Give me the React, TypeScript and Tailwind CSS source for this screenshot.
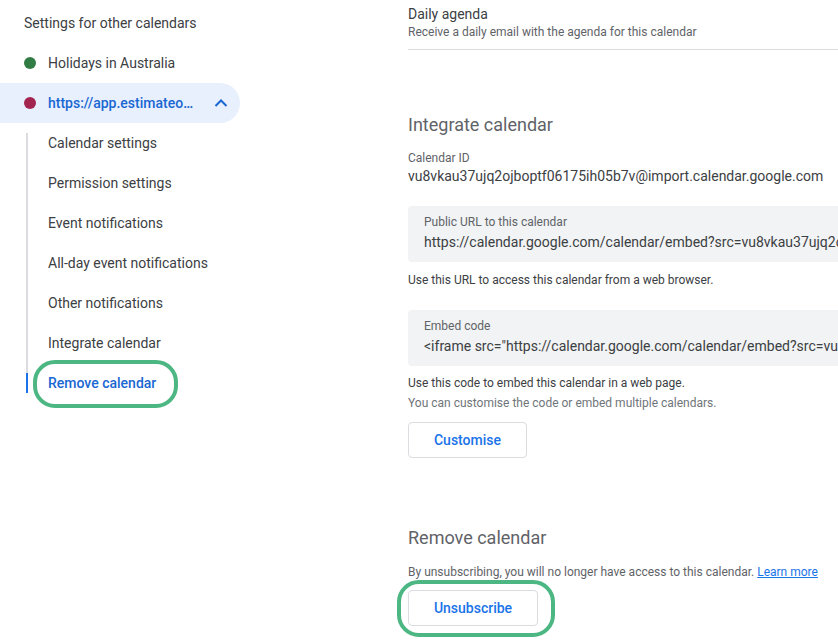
import React from "react";

const subItems = [
  "Calendar settings",
  "Permission settings",
  "Event notifications",
  "All-day event notifications",
  "Other notifications",
  "Integrate calendar",
];

export default function App() {
  return (
    <div
      className="flex w-[838px] h-[642px] overflow-hidden bg-white text-[#3c4043]"
      style={{ fontFamily: "Roboto, 'Liberation Sans', Arial, sans-serif" }}
    >
      {/* Sidebar */}
      <div className="w-[408px] shrink-0 pt-[3px]">
        <div className="h-[40px] flex items-center pl-[24px] text-[14px] leading-[20px] text-[#3c4043]">
          Settings for other calendars
        </div>
        <div className="h-[40px] flex items-center pl-[24px] text-[14px] leading-[20px]">
          <span className="w-[12px] h-[12px] rounded-full bg-[#317c45] shrink-0" />
          <span className="ml-[12px]">Holidays in Australia</span>
        </div>
        <div className="w-[240px] h-[40px] flex items-center pl-[24px] pr-[12px] bg-[#e8f0fe] rounded-r-full">
          <span className="w-[12px] h-[12px] rounded-full bg-[#a2244f] shrink-0" />
          <span className="ml-[12px] flex-1 text-[14px] leading-[20px] font-medium text-[#1967d2] whitespace-nowrap">
            https://app.estimateo…
          </span>
          <svg width="14" height="10" viewBox="0 0 14 10">
            <polyline
              points="1.5,8 7,2.5 12.5,8"
              fill="none"
              stroke="#1967d2"
              strokeWidth="2"
            />
          </svg>
        </div>
        <div className="ml-[26px] mt-[10px] border-l-2 border-[#dadce0] flex flex-col gap-5 text-[14px] leading-[20px]">
          {subItems.map((s) => (
            <div key={s} className="h-[20px] pl-[20px] whitespace-nowrap">
              {s}
            </div>
          ))}
          <div className="relative h-[20px] -ml-[2px] border-l-2 border-[#1a73e8] pl-[20px] font-medium text-[#1967d2] whitespace-nowrap">
            Remove calendar
            <span className="absolute -top-[13px] left-[5px] w-[145px] h-[48px] rounded-[22px] border-[4px] border-[#4cb782]" />
          </div>
        </div>
      </div>

      {/* Content */}
      <div className="flex-1 min-w-0 pt-[4px]">
        <div className="pb-[9px] border-b border-[#dadce0]">
          <div className="text-[14px] leading-[20px] text-[#3c4043]">Daily agenda</div>
          <div className="text-[12px] leading-[16px] text-[#5f6368]">
            Receive a daily email with the agenda for this calendar
          </div>
        </div>

        <div className="mt-[63px] text-[18px] leading-[24px] text-[#5f6368]">Integrate calendar</div>
        <div className="mt-[13px] text-[12px] leading-[16px] text-[#5f6368]">Calendar ID</div>
        <div className="text-[14px] leading-[20px] text-[#3c4043] whitespace-nowrap">
          vu8vkau37ujq2ojboptf06175ih05b7v@import.calendar.google.com
        </div>

        <div className="mt-[20px] w-[430px] h-[56px] overflow-hidden bg-[#f1f3f4] rounded-l-[4px] pl-[16px] pt-[8px]">
          <div className="text-[12px] leading-[16px] text-[#5f6368]">Public URL to this calendar</div>
          <div className="mt-[2px] text-[14px] leading-[20px] text-[#3c4043] whitespace-nowrap">
            https://calendar.google.com/calendar/embed?src=vu8vkau37ujq2ojboptf06175ih05b7v%40import.calendar.google.com
          </div>
        </div>
        <div className="mt-[10px] text-[12px] leading-[16px] text-[#3c4043]">
          Use this URL to access this calendar from a web browser.
        </div>

        <div className="mt-[22px] w-[430px] h-[56px] overflow-hidden bg-[#f1f3f4] rounded-l-[4px] pl-[16px] pt-[8px]">
          <div className="text-[12px] leading-[16px] text-[#5f6368]">Embed code</div>
          <div className="mt-[2px] text-[14px] leading-[20px] text-[#3c4043] whitespace-nowrap">
            &lt;iframe src="https://calendar.google.com/calendar/embed?src=vu8vkau37ujq2ojboptf06175ih05b7v"&gt;
          </div>
        </div>
        <div className="mt-[7px] text-[12px] leading-[20px] text-[#3c4043]">
          Use this code to embed this calendar in a web page.
        </div>
        <div className="text-[12px] leading-[20px] text-[#70757a]">
          You can customise the code or embed multiple calendars.
        </div>

        <button className="mt-[9px] w-[119px] h-[36px] border border-[#dadce0] rounded-[4px] text-[14px] font-medium text-[#1a73e8] flex items-center justify-center">
          Customise
        </button>

        <div className="mt-[68px] text-[18px] leading-[24px] text-[#5f6368]">Remove calendar</div>
        <div className="mt-[14px] text-[12px] leading-[16px] text-[#5f6368] whitespace-nowrap">
          By unsubscribing, you will no longer have access to this calendar.{" "}
          <span className="text-[#1a73e8] underline">Learn more</span>
        </div>
        <div className="relative mt-[10px] w-[130px]">
          <button className="w-[130px] h-[36px] border border-[#dadce0] rounded-[4px] text-[14px] font-medium text-[#1a73e8] flex items-center justify-center">
            Unsubscribe
          </button>
          <span className="absolute -top-[10px] -left-[11px] w-[158px] h-[57px] rounded-[22px] border-[4px] border-[#4cb782]" />
        </div>
      </div>
    </div>
  );
}
